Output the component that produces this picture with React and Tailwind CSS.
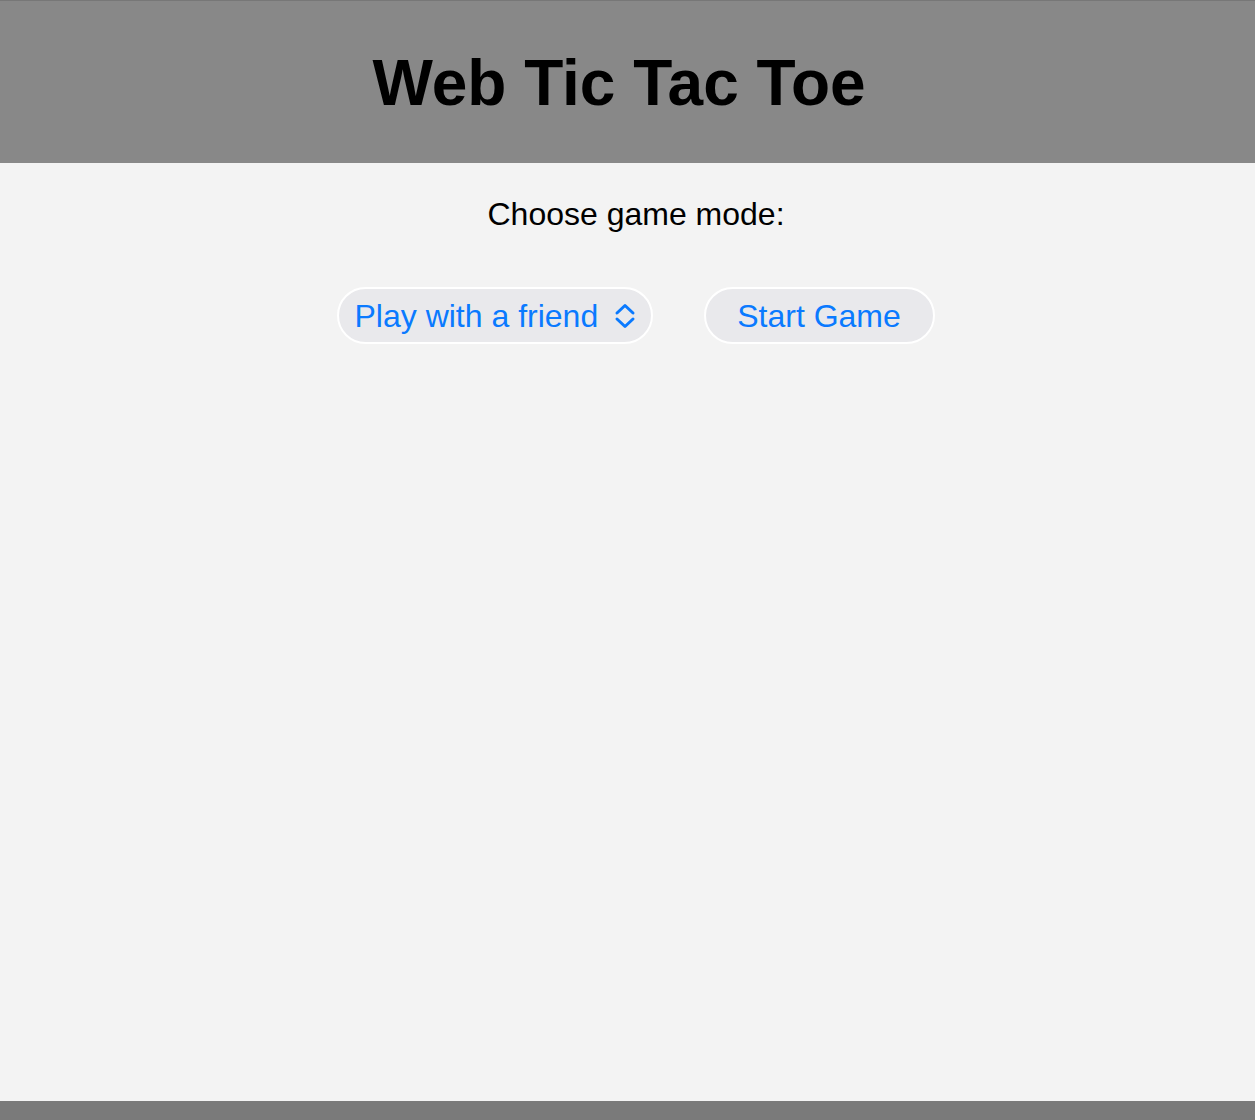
function Chevrons() {
  return (
    <svg width="24" height="28" viewBox="0 0 24 28" fill="none" stroke="#0a7aff" strokeWidth="3" strokeLinecap="round" strokeLinejoin="round">
      <path d="M4 11 L12 3.5 L20 11" />
      <path d="M4 17 L12 24.5 L20 17" />
    </svg>
  )
}

export default function App() {
  return (
    <div className="min-h-screen flex flex-col bg-[#f3f3f3]" style={{ fontFamily: '"Liberation Sans", Arial, sans-serif' }}>
      <header className="h-[163px] bg-[#888888] border-t border-[#777777] flex items-center justify-center">
        <h1 className="text-[64px] font-bold text-black leading-none pr-[17px] mt-[2px]">Web Tic Tac Toe</h1>
      </header>

      <main className="flex-1 flex flex-col items-center">
        <p className="text-[32px] text-black leading-[37px] mt-[33px] pl-[17px]">Choose game mode:</p>

        <div className="flex items-center gap-[51px] mt-[54px] pl-[16px]">
          <div className="h-[57px] w-[316px] rounded-full border-2 border-white bg-[#e9e9ec] flex items-center justify-between pl-[16px] pr-[14px] text-[32px] text-[#0a7aff]">
            <span>Play with a friend</span>
            <Chevrons />
          </div>
          <button className="h-[57px] w-[231px] rounded-full border-2 border-white bg-[#e9e9ec] flex items-center justify-center text-[32px] text-[#0a7aff]">
            Start Game
          </button>
        </div>
      </main>

      <footer className="h-[19px] bg-[#7a7a7a]" />
    </div>
  )
}
